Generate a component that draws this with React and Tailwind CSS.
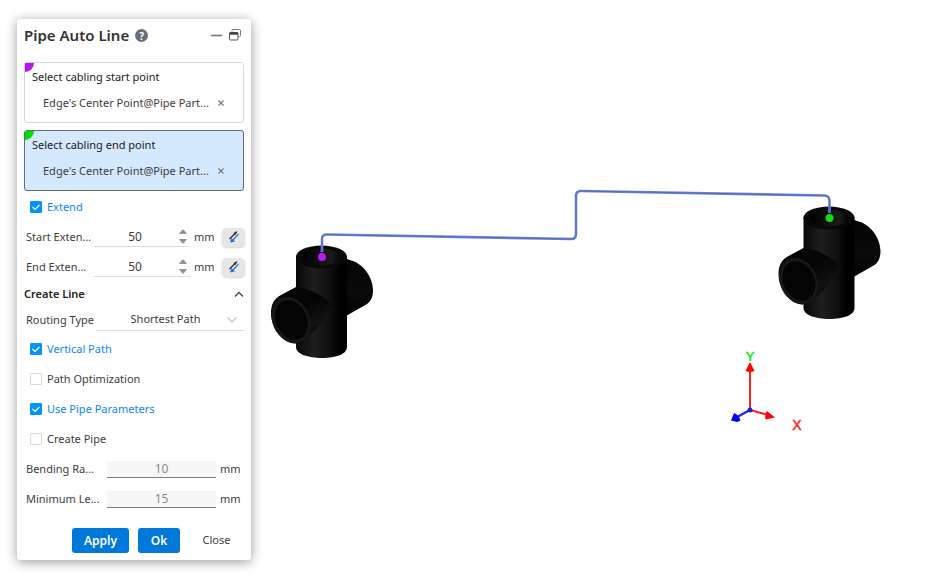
import React, { useState } from 'react';

function PickBox({ title, value, active, marker }) {
    return (
        <section
            aria-label={title}
            className={`relative h-[61px] rounded-[3px] border pt-1 flex flex-col gap-[6px] ${active ? 'border-[#62687a] bg-[#d4e8fe]' : 'border-[#d9d5d9] bg-white'}`}
        >
            <span className={`absolute left-0 top-0 size-[9px] rounded-br-full ${marker}`} />
            <h2 className="relative pl-[7px] leading-5 text-[#222]">{title}</h2>
            <div className="flex items-center pl-[18px] pr-4 leading-5">
                <span className="flex-1 whitespace-nowrap">{value}</span>
                <button type="button" aria-label="Remove" className="grid size-3 place-items-center">
                    <svg viewBox="0 0 6 6" className="size-[6px]" stroke="#777" strokeWidth="1.1">
                        <path d="M.5 .5l5 5M5.5 .5l-5 5" />
                    </svg>
                </button>
            </div>
        </section>
    );
}

function CheckRow({ label, defaultChecked = false }) {
    const [checked, setChecked] = useState(defaultChecked);
    return (
        <label className={`flex h-[30px] items-center gap-[5px] pl-[13px] ${checked ? 'text-[#0d84f5]' : ''}`}>
            <span className="grid size-3">
                <input
                    type="checkbox"
                    checked={checked}
                    onChange={e => setChecked(e.target.checked)}
                    className="size-3 appearance-none rounded-[1px] border border-[#d6d9e2] bg-white [grid-area:1/1] checked:border-[#0593fb] checked:bg-[#0593fb]"
                />
                {checked && (
                    <svg viewBox="0 0 12 12" className="pointer-events-none size-3 [grid-area:1/1]" fill="none" stroke="#fff" strokeWidth="1.2">
                        <path d="M2.500 6l2.500 2.500 4.500-4.500" />
                    </svg>
                )}
            </span>
            {label}
        </label>
    );
}

function StepRow({ id, label, defaultValue }) {
    const [value, setValue] = useState(defaultValue);
    return (
        <div className="flex h-[30px] items-center pl-[9px] pr-[6px]">
            <label htmlFor={id} className="w-[68px] whitespace-nowrap">{label}</label>
            <div className="flex h-5 flex-1 items-center border-b border-[#d9dbe4]">
                <input
                    id={id}
                    value={value}
                    onChange={e => setValue(Number(e.target.value) || 0)}
                    className="h-5 w-0 flex-1 text-center text-[12px] outline-none"
                />
                <div className="flex w-[14px] flex-col items-center gap-[5px]">
                    <button type="button" aria-label="Increase" onClick={() => setValue(value + 1)}>
                        <svg viewBox="0 0 8 5" className="block h-[5px] w-2" fill="#929292"><path d="M0 5L3 1Q4 0 5 1L8 5z" /></svg>
                    </button>
                    <button type="button" aria-label="Decrease" onClick={() => setValue(value - 1)}>
                        <svg viewBox="0 0 8 5" className="block h-[5px] w-2" fill="#929292"><path d="M0 0L3 4Q4 5 5 4L8 0z" /></svg>
                    </button>
                </div>
            </div>
            <span className="w-8 pl-1">mm</span>
            <button type="button" aria-label="Reverse direction" className="grid h-[19px] w-[23px] place-items-center rounded-[5px] bg-[#e6e6e6] shadow-[0_1px_2px_rgba(0,0,0,0.18)]">
                <svg viewBox="0 0 12 12" className="size-3">
                    <path d="M1.500 8L8.500 1" stroke="#333" strokeWidth="1.400" />
                    <path d="M9.500 0L5.500 2 7.500 4z" fill="#333" />
                    <path d="M10.500 3L4.500 9.500" stroke="#3f84dd" strokeWidth="1.500" />
                    <path d="M2 11.500L3.500 7 7 10.500z" fill="#2471d4" />
                </svg>
            </button>
        </div>
    );
}

function LockedRow({ id, label, value }) {
    return (
        <div className="flex h-[30px] items-center pl-[9px] pr-[7px]">
            <label htmlFor={id} className="w-[81px] whitespace-nowrap">{label}</label>
            <input id={id} value={value} disabled className="h-[17px] w-0 flex-1 border-b border-[#7d7d7d] bg-[#f7f7f7] text-center text-[12px] text-[#8a8a8a]" />
            <span className="w-7 pl-1">mm</span>
        </div>
    );
}

// Cross fitting, origin at the middle of its top opening
function Fitting({ x, y, color }) {
    return (
        <g transform={`translate(${x} ${y})`}>
            <path d="M20-1C25 4 28 4 31 5C42 9 51 22 51 34C51 41 49 45 45 48L24 60L10 50z" fill="url(#back)" />
            <path d="M-26 0V91C-26 98-14 102 0 102S25 98 25 91V0z" fill="url(#body)" />
            <path d="M-41 39L-26 31C-12 32 4 41 13 52L-6 73L-18 84C-22 87-26 88-31 87C-42 84-51 70-51 57C-51 48-48 43-41 39z" fill="url(#arm)" />
            <ellipse cx="-31" cy="64" rx="18.500" ry="24" transform="rotate(-24 -31 64)" fill="#171717" />
            <ellipse cx="-30.500" cy="64" rx="15.500" ry="20.500" transform="rotate(-24 -30.500 64)" fill="#040404" />
            <ellipse cx="-.5" cy="1" rx="25.500" ry="11.500" fill="#080808" />
            <ellipse cx="-.5" cy="1" rx="19" ry="8.500" fill="url(#bore)" />
            <circle cx="0" cy="1" r="4" fill={color} />
        </g>
    );
}

function Scene() {
    return (
        <svg viewBox="251 0 685 575" className="block w-full" role="img" aria-label="Pipe model view">
            <defs>
                <linearGradient id="body">
                    <stop offset="0" stopColor="#080808" />
                    <stop offset=".35" stopColor="#1e1e1e" />
                    <stop offset=".65" stopColor="#101010" />
                    <stop offset=".85" stopColor="#000" />
                </linearGradient>
                <linearGradient id="arm" x1="0" y1="0" x2=".5" y2="1">
                    <stop offset="0" stopColor="#050505" />
                    <stop offset=".45" stopColor="#040404" />
                    <stop offset=".8" stopColor="#121212" />
                    <stop offset="1" stopColor="#050505" />
                </linearGradient>
                <linearGradient id="back" x1="0" y1="0" x2="0" y2="1">
                    <stop offset="0" stopColor="#030303" />
                    <stop offset=".6" stopColor="#0a0a0a" />
                    <stop offset="1" stopColor="#020202" />
                </linearGradient>
                <linearGradient id="bore">
                    <stop offset="0" stopColor="#000" />
                    <stop offset=".75" stopColor="#1b1b1b" />
                    <stop offset="1" stopColor="#060606" />
                </linearGradient>
            </defs>

            <Fitting x={322} y={256} color="#bb18f5" />
            <Fitting x={829.5} y={217} color="#12dc12" />
            <path
                d="M322 252V239Q322 234.500 327 234.500L571 239Q576 239 576 234V196Q576 191 581 191L824 195.500Q829.500 195.500 829.500 201V213"
                fill="none" stroke="#7084d0" strokeWidth="2.600"
            />
            <path
                d="M322 252V239Q322 234.500 327 234.500L571 239Q576 239 576 234V196Q576 191 581 191L824 195.500Q829.500 195.500 829.500 201V213"
                fill="none" stroke="#526bc6" strokeWidth="1"
            />

            {/* Axes */}
            <path d="M750 410V368M750 410L768 415" stroke="#ff2020" strokeWidth="2" />
            <path d="M750 362L754.500 371Q750 373 745.500 371z" fill="#f00" />
            <path d="M775 417.500L767 411Q764.500 414 765.500 419.500z" fill="#f00" />
            <path d="M750 410L738 416.500" stroke="#1a1aff" strokeWidth="2" />
            <path d="M731 420.500L734 413Q739 415 740.500 420.500L737 422z" fill="#00e" />
            <circle cx="750" cy="410" r="2.500" fill="#22c" />
            <text x="750" y="361" textAnchor="middle" fontSize="13" fontFamily="Liberation Sans, sans-serif" stroke="#1eea1e" strokeWidth=".5" fill="#1eea1e">Y</text>
            <text x="797" y="430" textAnchor="middle" fontSize="14" fontFamily="Liberation Sans, sans-serif" stroke="#ff2a2a" strokeWidth=".5" fill="#ff2a2a">X</text>
        </svg>
    );
}

export default function App() {
    return (
        <div className="flex min-h-screen items-start overflow-hidden bg-white font-['Noto_Sans',sans-serif] text-[11px] text-[#3c3c3c]">
            <aside className="ml-[17px] mt-[19px] w-[234px] shrink-0 rounded-[3px] bg-white pb-[7px] shadow-[0_2px_12px_rgba(0,0,0,0.4)]">
                <header className="flex h-[43px] items-start pl-[7px] pr-[10px] pt-[6px]">
                    <h1 className="text-[15px] font-semibold leading-5 text-[#333]">Pipe Auto Line</h1>
                    <button type="button" aria-label="Help" className="ml-[6px] mt-1 grid size-[13px] place-items-center rounded-full bg-[#66707c] text-[10px] font-bold leading-3 text-white">?</button>
                    <div className="ml-auto flex h-5 items-center gap-[7px]">
                        <button type="button" aria-label="Minimize">
                            <svg viewBox="0 0 11 12" className="block h-3 w-[11px]" stroke="#777" strokeWidth="1.600"><path d="M0 6.500H11" /></svg>
                        </button>
                        <button type="button" aria-label="Restore">
                            <svg viewBox="0 0 12 12" className="block size-3" fill="none" stroke="#555">
                                <path d="M3 2.500V1.500Q3 .5 4 .5H10.500Q11.500 .5 11.500 1.500V6.500Q11.500 7.500 10.500 7.500H9.500" stroke="#777" />
                                <rect x=".5" y="3.500" width="8.500" height="7.500" rx="1" />
                                <path d="M.5 4.500H9" stroke="#444" strokeWidth="2.500" />
                            </svg>
                        </button>
                    </div>
                </header>

                <div className="flex flex-col gap-[7px] px-[7px] pb-px">
                    <PickBox title="Select cabling start point" value="Edge's Center Point@Pipe Part..." marker="bg-[#bd10fa]" />
                    <PickBox title="Select cabling end point" value="Edge's Center Point@Pipe Part..." marker="bg-[#00e000]" active />
                </div>

                <CheckRow label="Extend" defaultChecked />
                <StepRow id="start-ext" label="Start Exten..." defaultValue={50} />
                <StepRow id="end-ext" label="End Exten..." defaultValue={50} />

                <button type="button" className="flex h-6 w-full items-center justify-between pl-[7px] pr-[7px] font-semibold text-[#222]">
                    Create Line
                    <svg viewBox="0 0 10 6" className="h-[6px] w-[10px]" fill="none" stroke="#444" strokeWidth="1.300"><path d="M1 5.500L5 1.500l4 4" /></svg>
                </button>

                <div className="flex h-7 items-center pl-[9px] pr-[7px]">
                    <label htmlFor="routing" className="w-[70px] whitespace-nowrap">Routing Type</label>
                    <div className="grid flex-1 items-center border-b border-[#d9dbe4]">
                        <select id="routing" className="h-5 w-full appearance-none pr-[9px] text-center [grid-area:1/1] [text-align-last:center]">
                            <option>Shortest Path</option>
                        </select>
                        <svg viewBox="0 0 10 6" className="pointer-events-none mr-[7px] h-[6px] w-[10px] justify-self-end [grid-area:1/1]" fill="none" stroke="#bfc3cf" strokeWidth="1.200"><path d="M.5 .5L5 5 9.500 .5" /></svg>
                    </div>
                </div>

                <CheckRow label="Vertical Path" defaultChecked />
                <CheckRow label="Path Optimization" />
                <CheckRow label="Use Pipe Parameters" defaultChecked />
                <CheckRow label="Create Pipe" />
                <LockedRow id="bend" label="Bending Ra..." value="10" />
                <LockedRow id="min-len" label="Minimum Le..." value="15" />

                <footer className="mt-[14px] flex h-[25px] justify-end gap-[9px] pr-[7px]">
                    <button type="button" className="w-[57px] rounded-[3px] bg-[#0078d9] text-[12px] font-semibold text-white">Apply</button>
                    <button type="button" className="w-[42px] rounded-[3px] bg-[#0078d9] text-[12px] font-semibold text-white">Ok</button>
                    <button type="button" className="w-[55px]">Close</button>
                </footer>
            </aside>
            <main className="min-w-0 flex-1">
                <Scene />
            </main>
        </div>
    );
}
